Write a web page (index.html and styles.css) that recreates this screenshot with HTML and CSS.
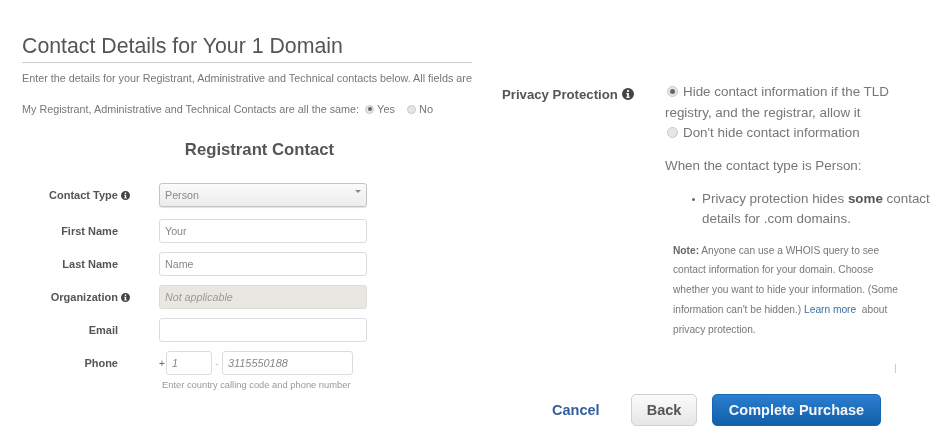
FILE: index.html
```html
<!DOCTYPE html>
<html lang="en">
<head>
  <meta charset="UTF-8" />
  <title>Contact Details</title>
  <link rel="stylesheet" href="styles.css">
</head>
<body>
  <div class="page">

    <!-- Contact form -->
    <div class="contact">
      <h1>Contact Details for Your 1 Domain</h1>
      <p class="intro">Enter the details for your Registrant, Administrative and Technical contacts below. All fields are required.</p>
      <div class="same">
        <span>My Registrant, Administrative and Technical Contacts are all the same:</span>
        <span class="radio on small"></span><span class="choice">Yes</span>
        <span class="radio small"></span><span class="choice">No</span>
      </div>

      <h2>Registrant Contact</h2>

      <div class="row">
        <label>Contact Type <svg class="info" viewBox="0 0 16 16"><use href="#info"/></svg></label>
        <div class="field select">Person<span class="caret"></span></div>
      </div>
      <div class="row">
        <label>First Name</label>
        <div class="field">Your</div>
      </div>
      <div class="row">
        <label>Last Name</label>
        <div class="field">Name</div>
      </div>
      <div class="row">
        <label>Organization <svg class="info" viewBox="0 0 16 16"><use href="#info"/></svg></label>
        <div class="field disabled">Not applicable</div>
      </div>
      <div class="row">
        <label>Email</label>
        <div class="field"></div>
      </div>
      <div class="row phone-row">
        <label>Phone</label>
        <div class="phone">
          <span class="plus">+</span>
          <div class="field code">1</div>
          <span class="dash">-</span>
          <div class="field number">3115550188</div>
        </div>
      </div>
      <p class="hint">Enter country calling code and phone number</p>
    </div>

    <!-- Privacy -->
    <div class="privacy">
      <div class="privacy-top">
        <div class="privacy-label">Privacy Protection <svg class="info big" viewBox="0 0 16 16"><use href="#info"/></svg></div>
        <div class="privacy-body">
          <div class="option"><span class="radio on first"></span>Hide contact information if the TLD registry, and the registrar, allow it</div>
          <div class="option"><span class="radio second"></span>Don't hide contact information</div>
          <p class="when">When the contact type is Person:</p>
          <ul>
            <li>Privacy protection hides <b>some</b> contact details for .com domains.</li>
          </ul>
          <p class="note"><b>Note:</b> Anyone can use a WHOIS query to see contact information for your domain. Choose whether you want to hide your information. (Some information can't be hidden.) <a href="#">Learn more</a> &nbsp;about privacy protection.</p>
          <div class="tick"></div>
        </div>
      </div>
      <div class="actions">
        <a class="cancel" href="#">Cancel</a>
        <button class="back">Back</button>
        <button class="complete">Complete Purchase</button>
      </div>
    </div>
  </div>

  <svg width="0" height="0" class="defs">
    <symbol id="info" viewBox="0 0 16 16">
      <path fill-rule="evenodd" d="M8 0a8 8 0 1 1 0 16A8 8 0 0 1 8 0zM6.8 2.8v2.6h2.4V2.8zM5.8 6.8v1.6h1v3.2h-1v1.6h4.4v-1.6h-1V6.8z"/>
    </symbol>
  </svg>
</body>
</html>
```

FILE: styles.css
```css
* {
  margin: 0;
  padding: 0;
  box-sizing: border-box;
}

body {
  background: #fff;
  color: #666;
  font-family: 'Liberation Sans', Arial, sans-serif;
  overflow: hidden;
}

.page {
  display: flex;
  align-items: flex-start;
  height: 446px;
  filter: blur(0.6px);
}

.defs {
  position: absolute;
}

/* Left column */
.contact {
  width: 450px;
  margin-left: 22px;
  padding-top: 34px;
  overflow: hidden;
}

h1 {
  font-size: 21.3px;
  font-weight: normal;
  line-height: 24px;
  color: #555;
  padding-bottom: 4px;
  border-bottom: 1px solid #ccc;
}

.intro {
  font-size: 10.8px;
  line-height: 14px;
  margin-top: 8px;
  white-space: nowrap;
  color: #777;
}

.same {
  display: flex;
  align-items: center;
  font-size: 10.8px;
  line-height: 14px;
  margin-top: 17px;
  white-space: nowrap;
  color: #777;
}

.same .choice {
  font-size: 11px;
  margin-right: 6px;
}

h2 {
  font-size: 16.7px;
  font-weight: bold;
  line-height: 20px;
  color: #555;
  text-align: center;
  width: 475px;
  margin-top: 24px;
}

.row {
  display: flex;
  align-items: center;
  margin-bottom: 9px;
}

h2 + .row {
  margin-top: 23px;
  margin-bottom: 12px;
}

label {
  width: 96px;
  margin-right: 41px;
  font-size: 11px;
  font-weight: bold;
  color: #555;
  text-align: right;
  white-space: nowrap;
}

.info {
  width: 9px;
  height: 9px;
  fill: #444;
  margin-right: -12px;
  vertical-align: -1px;
}

.field {
  width: 208px;
  height: 24px;
  padding-left: 5px;
  border: 1px solid #dcdcdc;
  border-radius: 3px;
  background: #fff;
  color: #888;
  font-size: 10.7px;
  line-height: 22px;
}

.select {
  position: relative;
  background: linear-gradient(#fbfbfb, #ececec);
  border-color: #c4c4c4;
  box-shadow: 0 1px 1px rgba(0, 0, 0, 0.12);
}

.caret {
  position: absolute;
  top: 6px;
  right: 5px;
  border-left: 3px solid transparent;
  border-right: 3px solid transparent;
  border-top: 3px solid #888;
}

.disabled {
  background: #e8e7e1;
  font-style: italic;
  color: #999;
}

.phone {
  display: flex;
  align-items: center;
  font-size: 10px;
}

.plus {
  width: 7px;
  color: #666;
}

.dash {
  width: 10px;
  text-align: center;
  color: #bbb;
}

.code {
  width: 46px;
  font-style: italic;
}

.number {
  width: 131px;
  font-size: 10.9px;
  font-style: italic;
  padding-left: 5px;
}

.phone-row {
  margin-bottom: 0;
}

.hint {
  margin: 4px 0 0 140px;
  font-size: 9.35px;
  line-height: 12px;
  color: #999;
}

/* Radios */
.radio {
  display: inline-block;
  flex: none;
  position: relative;
  width: 11px;
  height: 11px;
  border-radius: 50%;
  border: 1px solid #c8c8c8;
  background: #e6e6e6;
  margin-right: 4px;
  vertical-align: -1px;
}

.radio.small {
  width: 9px;
  height: 9px;
  margin-left: 6px;
  margin-right: 3px;
}

.radio.on::after {
  content: "";
  position: absolute;
  top: 50%;
  left: 50%;
  width: 5px;
  height: 5px;
  margin: -2.5px 0 0 -2.5px;
  border-radius: 50%;
  background: #666;
}

.radio.small.on::after {
  width: 4px;
  height: 4px;
  margin: -2px 0 0 -2px;
}

.radio.first {
  margin-left: 2px;
  margin-right: 5px;
}

.radio.second {
  margin-left: 2px;
  margin-right: 5px;
}

/* Right column */
.privacy {
  width: 447px;
  margin-left: 30px;
  padding-top: 82px;
}

.privacy-top {
  display: flex;
}

.privacy-label {
  width: 163px;
  padding-top: 3px;
  font-size: 13.2px;
  font-weight: bold;
  color: #555;
  line-height: 20px;
  white-space: nowrap;
}

.info.big {
  width: 12px;
  height: 12px;
  margin: 0 0 0 1px;
}

.privacy-body {
  width: 275px;
  font-size: 13.4px;
  color: #777;
}

.option {
  line-height: 20.6px;
  width: 232px;
}

.when {
  line-height: 20px;
  margin-top: 12px;
}

ul {
  list-style: none;
  margin: 13px 0 0 37px;
}

li {
  position: relative;
  line-height: 20px;
}

li::before {
  content: "";
  position: absolute;
  left: -10px;
  top: 9px;
  width: 3px;
  height: 3px;
  border-radius: 50%;
  background: #666;
}

li b {
  color: #555;
}

.note {
  font-size: 10.2px;
  line-height: 19.7px;
  margin: 12px 0 0 8px;
  width: 232px;
  color: #777;
}

.note b {
  color: #666;
}

.note a {
  color: #3b6ea5;
  text-decoration: none;
}

.tick {
  width: 1px;
  height: 9px;
  background: #ccc;
  margin: 25px 0 0 230px;
}

.actions {
  display: flex;
  align-items: center;
  margin: 21px 0 0 50px;
}

.cancel {
  width: 79px;
  font-size: 14.5px;
  font-weight: bold;
  color: #2f5f9e;
  text-decoration: none;
}

button {
  height: 32px;
  border-radius: 5px;
  font-family: inherit;
  font-size: 14.5px;
  font-weight: bold;
}

.back {
  width: 66px;
  margin-right: 15px;
  border: 1px solid #d0d0d0;
  background: linear-gradient(#fbfbfb, #e6e6e6);
  color: #555;
}

.complete {
  width: 169px;
  border: 1px solid #1a66b3;
  background: linear-gradient(#2a7fd0, #125ea8);
  color: #f2f6fb;
}
```
